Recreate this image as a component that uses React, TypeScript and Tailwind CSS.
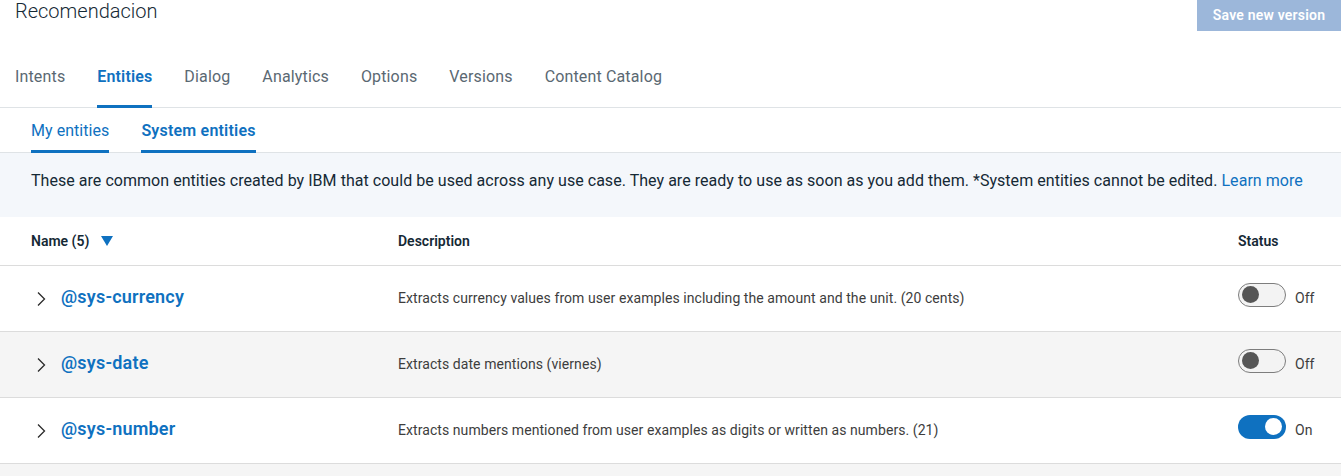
import { useState } from 'react';

const tabs = ['Intents', 'Entities', 'Dialog', 'Analytics', 'Options', 'Versions', 'Content Catalog'];

const entities = [
  {
    name: '@sys-currency',
    description: 'Extracts currency values from user examples including the amount and the unit. (20 cents)',
    on: false,
  },
  { name: '@sys-date', description: 'Extracts date mentions (viernes)', on: false },
  {
    name: '@sys-number',
    description: 'Extracts numbers mentioned from user examples as digits or written as numbers. (21)',
    on: true,
  },
];

function Toggle({ on }: { on: boolean }) {
  return on ? (
    <span className="mb-[8px] flex h-6 w-12 items-center justify-end rounded-full bg-[#0f71c0] pr-[4px]">
      <span className="h-[17px] w-[17px] rounded-full bg-white" />
    </span>
  ) : (
    <span className="mb-[8px] flex h-6 w-12 items-center rounded-full border-[1.5px] border-[#7d7d7d] bg-[#f3f3f3] pl-[3px]">
      <span className="h-[17px] w-[17px] rounded-full bg-[#565656]" />
    </span>
  );
}

function Chevron() {
  return (
    <svg width="10" height="16" viewBox="0 0 10 16" fill="none" className="shrink-0">
      <path d="M2 1.5 L8.5 8 L2 14.5" stroke="#2a2a2a" strokeWidth="1.3" />
    </svg>
  );
}

export default function App() {
  const [active] = useState('Entities');

  return (
    <div className="h-[476px] w-[1341px] overflow-hidden bg-white font-['Roboto',sans-serif] text-[#152935]">
      {/* Top bar */}
      <div className="flex h-[31px] items-start justify-between">
        <h1 className="pl-[15px] text-[20px] font-light leading-[22px] text-[#152935]">Recomendacion</h1>
        <button className="flex h-[31px] w-[144px] items-center justify-center bg-[#9cb7da] text-[14px] font-semibold tracking-[0.2px] text-white">
          Save new version
        </button>
      </div>

      {/* Main tabs */}
      <div className="flex gap-8 border-b border-[#dfe3e6] pt-[34px] pl-[15px]">
        {tabs.map((t) => (
          <div
            key={t}
            className={
              t === active
                ? '-mb-px border-b-[3px] border-[#0f71c0] pb-[16px] text-[16px] font-semibold leading-6 tracking-[0.15px] text-[#0f71c0]'
                : '-mb-px border-b-[3px] border-transparent pb-[16px] text-[16px] leading-6 tracking-[0.15px] text-[#5a6872]'
            }
          >
            {t}
          </div>
        ))}
      </div>

      {/* Sub tabs */}
      <div className="flex gap-8 border-b border-[#dfe3e6] pt-[11px] pl-[31px]">
        <div className="-mb-px border-b-[3px] border-[#0f71c0] pb-[7px] text-[16px] leading-6 tracking-[0.05px] text-[#0f71c0]">
          My entities
        </div>
        <div className="-mb-px border-b-[3px] border-[#0f71c0] pb-[7px] text-[16px] font-semibold leading-6 tracking-[0.2px] text-[#0f71c0]">
          System entities
        </div>
      </div>

      {/* Info */}
      <div className="h-[64px] bg-[#f4f7fb] pt-[16px] pl-[31px] text-[16px] leading-6 tracking-[0.04px] text-[#152935]">
        These are common entities created by IBM that could be used across any use case. They are ready to use as
        soon as you add them. *System entities cannot be edited.{' '}
        <span className="text-[#0f71c0]">Learn more</span>
      </div>

      {/* Table header */}
      <div className="grid h-[49px] grid-cols-[398px_840px_103px] items-center border-b border-[#dcdcdc] text-[14px] font-semibold text-[#152935]">
        <div className="flex items-center gap-3 pl-[31px]">
          <span>Name (5)</span>
          <svg width="12" height="10" viewBox="0 0 12 10">
            <path d="M0 0 H12 L6 10 Z" fill="#0f71c0" />
          </svg>
        </div>
        <div>Description</div>
        <div>Status</div>
      </div>

      {/* Rows */}
      {entities.map((e, i) => (
        <div
          key={e.name}
          className={`grid h-[66px] grid-cols-[398px_840px_103px] items-center border-b border-[#dcdcdc] ${
            i % 2 === 1 ? 'bg-[#f5f5f5]' : 'bg-white'
          }`}
        >
          <div className="flex items-center gap-[15px] pl-[36px]">
            <Chevron />
            <span className="mb-[5px] text-[18px] font-semibold tracking-[0.2px] text-[#0f71c0]">{e.name}</span>
          </div>
          <div className="text-[14px] tracking-[0.07px] text-[#3d3d3d]">{e.description}</div>
          <div className="flex items-center gap-[9px]">
            <Toggle on={e.on} />
            <span className="text-[14px] text-[#3d3d3d]">{e.on ? 'On' : 'Off'}</span>
          </div>
        </div>
      ))}
      <div className="h-[20px] bg-[#f5f5f5]" />
    </div>
  );
}
